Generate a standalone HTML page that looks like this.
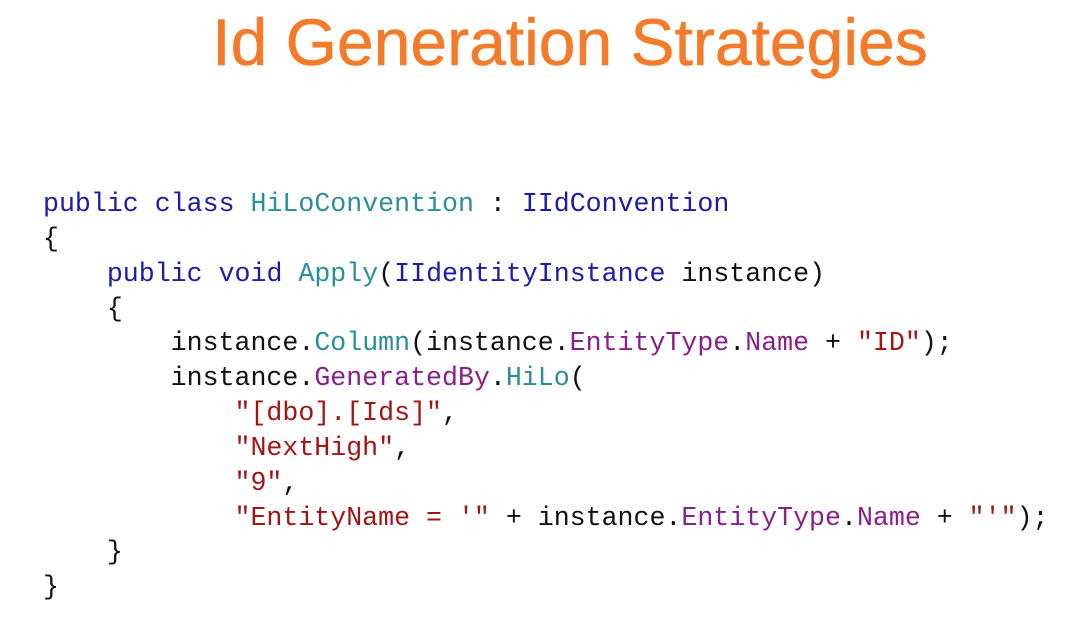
<!DOCTYPE html>
<html><head><meta charset="utf-8"><style>
html,body{margin:0;padding:0;background:#fff;width:1075px;height:632px;overflow:hidden}
.t{position:absolute;left:0;width:1140px;top:4px;text-align:center;font-family:"Liberation Sans",sans-serif;font-size:66px;color:#f47b2a;-webkit-text-stroke:0.6px #f47b2a}
pre{position:absolute;left:43px;top:187px;margin:0;font-family:"Liberation Mono",monospace;font-size:26.6px;line-height:34.85px;color:#111}
.k{color:#1c1ca8}.c{color:#2b8f98}.p{color:#8a1f8c}.s{color:#a31515}
</style></head><body>
<div class="t">Id Generation Strategies</div>
<pre><span class="k">public</span> <span class="k">class</span> <span class="c">HiLoConvention</span> : <span class="k">IIdConvention</span>
{
    <span class="k">public</span> <span class="k">void</span> <span class="c">Apply</span>(<span class="k">IIdentityInstance</span> instance)
    {
        instance.<span class="c">Column</span>(instance.<span class="p">EntityType</span>.<span class="p">Name</span> + <span class="s">"ID"</span>);
        instance.<span class="p">GeneratedBy</span>.<span class="c">HiLo</span>(
            <span class="s">"[dbo].[Ids]"</span>,
            <span class="s">"NextHigh"</span>,
            <span class="s">"9"</span>,
            <span class="s">"EntityName = '"</span> + instance.<span class="p">EntityType</span>.<span class="p">Name</span> + <span class="s">"'"</span>);
    }
}</pre>
</body></html>
